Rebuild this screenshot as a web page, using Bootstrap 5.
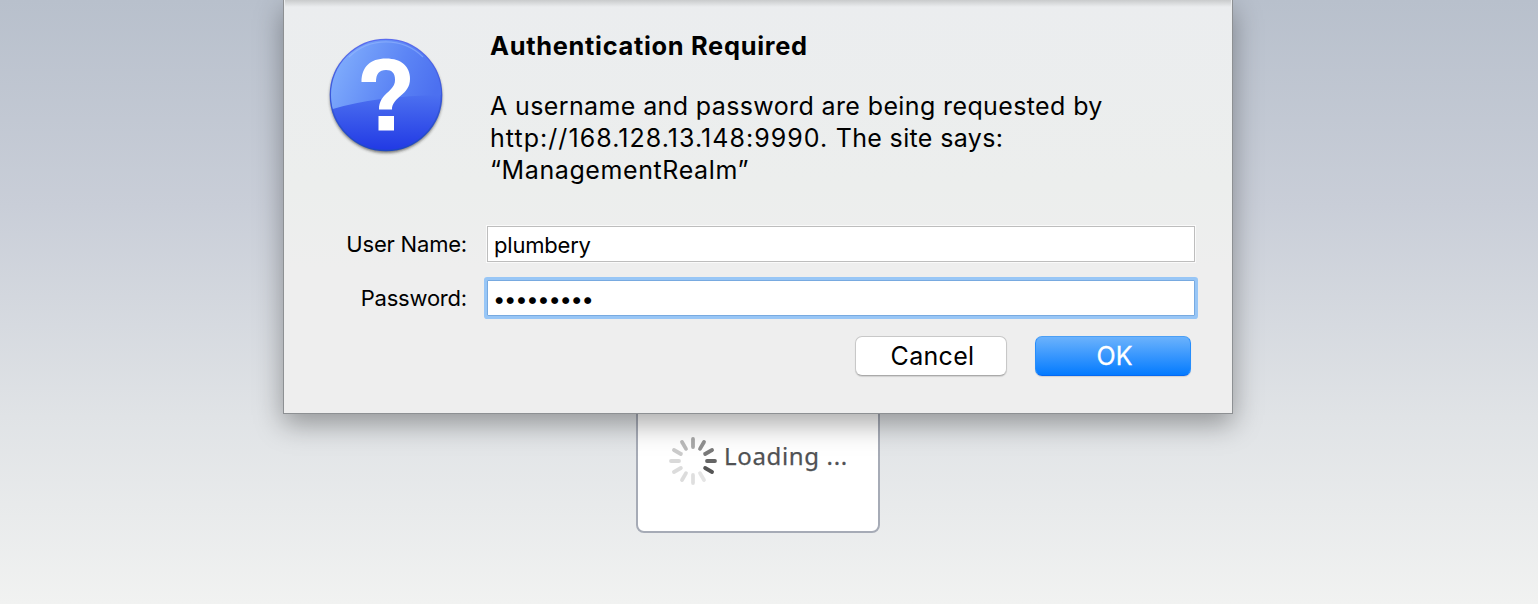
<!DOCTYPE html>
<html lang="en">
<head>
<meta charset="utf-8">
<meta name="viewport" content="width=device-width, initial-scale=1">
<title>Authentication Required</title>
<link href="https://cdn.jsdelivr.net/npm/bootstrap@5.3.0/dist/css/bootstrap.min.css" rel="stylesheet">
<style>
html,body{height:100%}
body{font-family:Inter,"Liberation Sans",sans-serif;color:#000;overflow:hidden;background:linear-gradient(#b8c0cc 0%,#c9ced8 34%,#e0e3e6 69%,#f1f2f1 100%)}
.stage{width:950px;margin-left:283px}
.auth-sheet{height:414px;z-index:1;background:linear-gradient(#ebedef 0,#eceeed 45%,#eee 65%);border:1px solid #8d9093;border-top:0;box-shadow:0 10px 26px rgba(0,0,0,.34);padding:29px 37px 0 42px}
.auth-sheet::before{content:"";position:absolute;inset:0 1px auto 1px;height:7px;background:linear-gradient(#c9cbcc,#ebedef)}
.auth-icon{width:124px;height:130px;margin-right:40px}
.auth-title{font-size:25.4px;font-weight:700;line-height:34px;margin-bottom:27px;letter-spacing:.7px}
.auth-text{font-size:25px;line-height:32px;white-space:nowrap}
.t1{letter-spacing:.38px}
.t2{letter-spacing:1.05px}
.t3{letter-spacing:.35px}
.t4{letter-spacing:.6px}
.auth-form{margin-top:39px}
.field-label{width:141px;font-size:22px;text-align:right;letter-spacing:-.2px}
.field{height:38px;border:1px solid #fafafa;background:#fff;margin:0 -1px 0 19px}
.field input{height:36px;width:100%;border:1px solid #bdbdbd;background:#fff;border-radius:0;padding:2px 6px 0;font-size:22px;color:#000;outline:0;display:block;letter-spacing:-.2px}
.field input.active-field{border-color:#78aae0;box-shadow:0 0 0 3px #98c6f6;border-radius:1px;letter-spacing:-1.3px;padding-left:5px}
.button-row{margin:19px 4px 0 0;gap:28px}
.mac-btn{height:40px;font-size:25px;line-height:37px;padding:0;border-radius:7px;border:1px solid #c8c8c8;border-bottom-color:#aaa;background:#fff;box-shadow:0 1px 1px rgba(0,0,0,.12);color:#000}
.cancel-btn{width:152px;letter-spacing:.3px;padding-left:3px}
.ok-btn{width:156px;border-color:#4b9ff5 #268dfc #0569f2;background:linear-gradient(#6bb2fc,#047bff);color:#fff;padding-left:3px;-webkit-text-stroke:.3px #fff}
.loading-box{width:244px;height:150px;margin-top:-31px;border:2px solid #a6abb6;border-radius:8px;background:#fff;padding:52px 0 0 31px}
.loading-text{font-family:"Noto Sans","Open Sans",sans-serif;font-size:24px;line-height:34px;color:#505254;margin:2px 0 0 7px;white-space:nowrap;letter-spacing:.65px;-webkit-text-stroke:.25px #505254}
</style>
</head>
<body>
<main class="stage">
  <section class="auth-sheet position-relative">
    <div class="d-flex align-items-start">
      <svg class="auth-icon flex-shrink-0 mt-1" viewBox="0 0 124 130">
        <defs>
          <linearGradient id="disc" x1="0" y1="0" x2="0" y2="1"><stop offset="0" stop-color="#567cf3"/><stop offset=".5" stop-color="#4c70f0"/><stop offset="1" stop-color="#2139e4"/></linearGradient>
          <linearGradient id="gloss" gradientUnits="userSpaceOnUse" x1="10" y1="25" x2="105" y2="68"><stop offset="0" stop-color="#80adfc"/><stop offset=".6" stop-color="#5c85f5"/><stop offset="1" stop-color="#4c70f0"/></linearGradient>
          <linearGradient id="rim" x1="0" y1="0" x2="0" y2="1"><stop offset="0" stop-color="#5a6cf0"/><stop offset="1" stop-color="#1c46c4"/></linearGradient>
          <clipPath id="face"><circle cx="60" cy="62" r="55"/></clipPath>
          <filter id="soft" x="-20%" y="-20%" width="140%" height="140%"><feGaussianBlur stdDeviation="1.8"/></filter>
        </defs>
        <circle cx="60" cy="64" r="56" fill="#222" opacity=".6" filter="url(#soft)"/>
        <circle cx="60" cy="62" r="55.5" fill="url(#disc)" stroke="url(#rim)" stroke-width="1.6"/>
        <path clip-path="url(#face)" d="M0 0H124V62Q50 62 0 78Z" fill="url(#gloss)"/>
        <path d="M23 24A53 53 0 0 1 97 24" fill="none" stroke="#9bbcff" stroke-width="1.2" opacity=".5"/>
        <path d="M35.500 49C35.500 34 44 25.500 60 25.500C76 25.500 84 34 84 46C84 62 66 64 66 76.500H53C53 60 69 59 69 47C69 40 66 37 60 37C53 37 50 41 50 49ZM52.500 83H68V97.500H52.500Z" fill="#fff"/>
      </svg>
      <div>
        <h1 class="auth-title">Authentication Required</h1>
        <p class="auth-text mb-0"><span class="t1">A username and password are being requested by</span><br><span class="t2">http://168.128.13.148:9990.</span><span class="t3"> The site says:</span><br><span class="t4">“ManagementRealm”</span></p>
      </div>
    </div>
    <form class="auth-form">
      <div class="d-flex align-items-center"><label class="field-label" for="user">User Name:</label><div class="field flex-grow-1"><input id="user" type="text" value="plumbery"></div></div>
      <div class="d-flex align-items-center mt-3"><label class="field-label" for="pass">Password:</label><div class="field flex-grow-1"><input id="pass" class="active-field" type="text" value="•••••••••"></div></div>
      <div class="d-flex justify-content-end button-row"><button type="button" class="btn mac-btn cancel-btn">Cancel</button><button type="button" class="btn mac-btn ok-btn">OK</button></div>
    </form>
  </section>
  <section class="loading-box mx-auto d-flex align-items-start">
    <svg width="48" height="48" viewBox="-24 -24 48 48" stroke-width="3.8" stroke-linecap="round" stroke="#555">
      <path d="M0-22V-14" opacity=".5"/><path d="M0-22V-14" transform="rotate(30)" opacity=".65"/><path d="M0-22V-14" transform="rotate(60)" opacity=".78"/><path d="M0-22V-14" transform="rotate(90)" opacity=".9"/><path d="M0-22V-14" transform="rotate(120)"/><path d="M0-22V-14" transform="rotate(150)" opacity=".15"/><path d="M0-22V-14" transform="rotate(180)" opacity=".18"/><path d="M0-22V-14" transform="rotate(210)" opacity=".2"/><path d="M0-22V-14" transform="rotate(240)" opacity=".2"/><path d="M0-22V-14" transform="rotate(270)" opacity=".22"/><path d="M0-22V-14" transform="rotate(300)" opacity=".3"/><path d="M0-22V-14" transform="rotate(330)" opacity=".4"/>
    </svg>
    <span class="loading-text">Loading ...</span>
  </section>
</main>
<script src="https://cdn.jsdelivr.net/npm/bootstrap@5.3.0/dist/js/bootstrap.bundle.min.js"></script>
</body>
</html>
